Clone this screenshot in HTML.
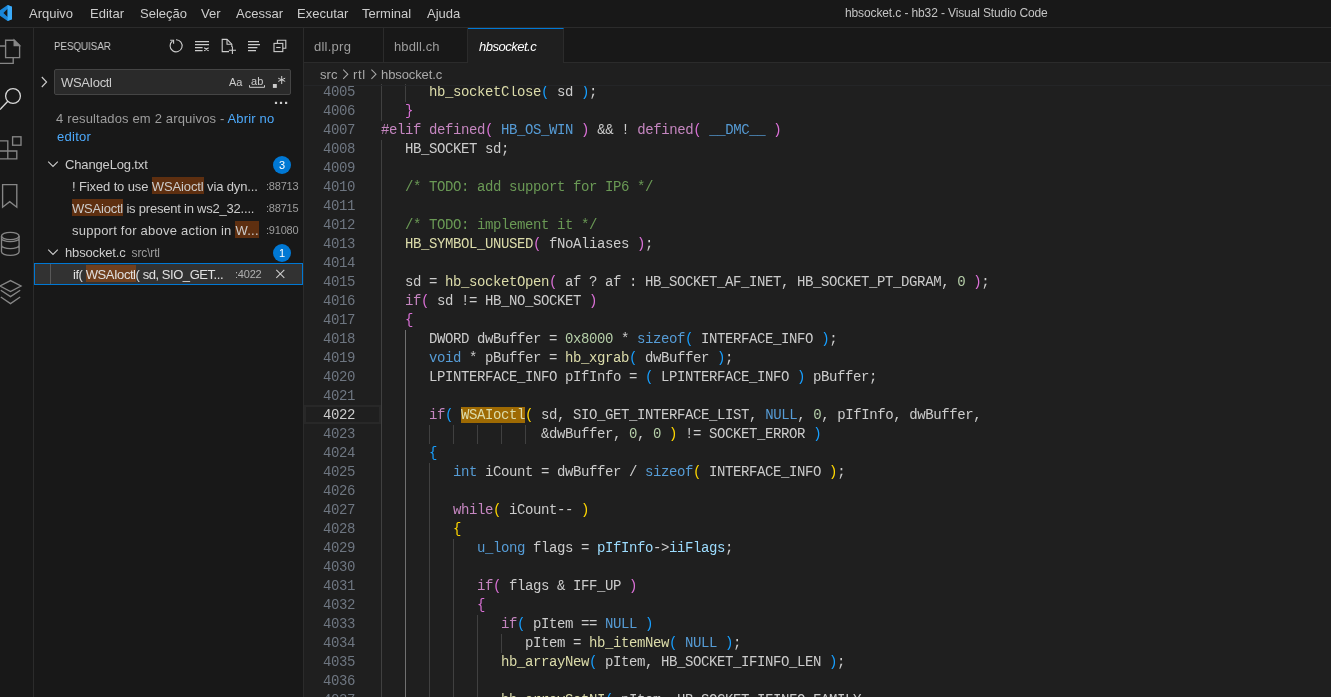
<!DOCTYPE html>
<html><head><meta charset="utf-8"><style>
*{margin:0;padding:0;box-sizing:border-box}
html,body{width:1331px;height:697px;overflow:hidden;background:#181818;font-family:"Liberation Sans",sans-serif;color:#cccccc;position:relative}
.a{position:absolute;white-space:pre;will-change:transform}
.hl{background:#5e2f10;padding:2.3px 0 0.3px}
.code{font-family:"Liberation Mono",monospace;font-size:14px;letter-spacing:-0.4px;line-height:19px;color:#cccccc;left:381px}
.ln{font-family:"Liberation Mono",monospace;font-size:14px;letter-spacing:-0.4px;line-height:19px;color:#6e7681;text-align:right;width:60px;left:295px}
.k{color:#c586c0}.t{color:#569cd6}.f{color:#dcdcaa}.c{color:#6a9955}.n{color:#b5cea8}.v{color:#9cdcfe}
.b1{color:#da70d6}.b2{color:#179fff}.b3{color:#ffd700}
.g{position:absolute;width:1px;background:#404040}
</style></head><body>
<div class="a" style="left:0;top:0;width:1331px;height:28px;background:#181818;border-bottom:1px solid #2b2b2b"></div>
<svg class="a" style="left:0;top:0" width="16" height="27" viewBox="0 0 16 27"><path fill="#1a86d8" fill-rule="evenodd" d="M-0.5 10.6 L7.6 5 L12 6.8 V19.2 L7.6 21 L-0.5 15.4 Z M3.4 12.9 L7.6 8.8 V17 Z"/><path fill="#3aaaf8" d="M7.6 5 L12 6.8 V19.2 L7.6 21 Z"/></svg>
<div class="a " style="left:29px;top:5.00px;font-size:13px;line-height:17px;color:#cccccc;">Arquivo</div>
<div class="a " style="left:90px;top:5.00px;font-size:13px;line-height:17px;color:#cccccc;">Editar</div>
<div class="a " style="left:140px;top:5.00px;font-size:13px;line-height:17px;color:#cccccc;">Seleção</div>
<div class="a " style="left:201px;top:5.00px;font-size:13px;line-height:17px;color:#cccccc;">Ver</div>
<div class="a " style="left:236px;top:5.00px;font-size:13px;line-height:17px;color:#cccccc;">Acessar</div>
<div class="a " style="left:297px;top:5.00px;font-size:13px;line-height:17px;color:#cccccc;">Executar</div>
<div class="a " style="left:362px;top:5.00px;font-size:13px;line-height:17px;color:#cccccc;">Terminal</div>
<div class="a " style="left:427px;top:5.00px;font-size:13px;line-height:17px;color:#cccccc;">Ajuda</div>
<div class="a " style="left:844.5px;top:4.74px;font-size:12px;line-height:16px;color:#c4c4c4;letter-spacing:-0.12px">hbsocket.c - hb32 - Visual Studio Code</div>
<div class="a" style="left:0;top:28px;width:34px;height:669px;background:#181818;border-right:1px solid #2b2b2b"></div>
<svg class="a" style="left:0;top:0" width="33" height="320" viewBox="0 0 33 320" fill="none" stroke="#868686" stroke-width="1.35"><path d="M5.6 40.2 H14.2 L19.6 45.6 V57.6 H5.6 Z"/><path d="M14 40.2 V45.8 H19.6" fill="#868686" stroke="none"/><path d="M14.2 40.2 L19.6 45.6 H14.2 Z" fill="#868686"/><path d="M0 46 H5.6 M13.2 57.6 V63.4 H0"/><circle cx="13" cy="96" r="7.4" stroke="#d7d7d7" stroke-width="1.3"/><path d="M7.8 101.3 L0 109.5" stroke="#d7d7d7" stroke-width="1.4"/><rect x="12.6" y="136.8" width="8.4" height="8.4"/><path d="M0 140.8 H7.8 V158.8 M0 151 H16.8 V158.8 H0"/><path d="M2.6 184.6 H16.8 V207.2 L9.7 201.6 L2.6 207.2 Z"/><ellipse cx="10.3" cy="236" rx="8.8" ry="3.6"/><path d="M1.5 236 V251.8 A8.8 3.6 0 0 0 19.1 251.8 V236 M1.5 238.2 A8.8 3.4 0 0 0 19.1 238.2 M1.5 245.2 A8.8 3.4 0 0 0 19.1 245.2"/><path d="M0 286 L10.5 280.6 L21 286 L10.5 291.6 Z M0.8 290.2 L10.5 296.6 L20.2 290.2 M0.8 297 L10.5 303.6 L20.2 297"/></svg>
<div class="a" style="left:34px;top:28px;width:270px;height:669px;background:#181818;border-right:1px solid #2b2b2b"></div>
<div class="a " style="left:54.2px;top:38.79px;font-size:11px;line-height:14px;color:#cccccc;transform:scaleX(0.885);transform-origin:0 0">PESQUISAR</div>
<svg class="a" style="left:160px;top:34px" width="140" height="26" viewBox="160 34 140 26" fill="none" stroke="#cccccc" stroke-width="1.1"><path d="M172.5 41 A6 6 0 1 0 176 39.8"/><path d="M170.2 40.2 H173.6 V43.8" /><path d="M195 41.6 H209 M195 44.6 H209 M195 47.6 H202.6 M195 50.6 H202.6 M204.2 47.8 L208.6 50.8 M208.6 47.8 L204.2 50.8"/><path d="M231.8 47 V44.2 L227 39.4 H222.2 V51.6 H229"/><path d="M227 39.4 V44.2 H231.8"/><path d="M232.4 46.6 V54 M228.8 50.3 H236"/><path d="M248 41.6 H259 M248 44.6 H260 M248 47.6 H257.4 M248 50.6 H256"/><path d="M277.4 43.2 V40.2 H285.8 V48.2 H283"/><rect x="274" y="43.4" width="8.8" height="8.2"/><path d="M276.2 47.5 H280.6"/></svg>
<svg class="a" style="left:38px;top:72px" width="14" height="20" viewBox="38 72 14 20" fill="none" stroke="#cccccc" stroke-width="1.1"><path d="M41.8 77 L46.6 82 L41.8 87"/></svg>
<div class="a" style="left:54px;top:69px;width:237px;height:26px;background:#2a2a2a;border:1px solid #454545;border-radius:2px"></div>
<div class="a " style="left:61px;top:73.80px;font-size:13px;line-height:17px;color:#cccccc;letter-spacing:-0.35px">WSAIoctl</div>
<div class="a " style="left:228.8px;top:75.39px;font-size:11px;line-height:14px;color:#cccccc;letter-spacing:-0.2px">Aa</div>
<div class="a " style="left:250.6px;top:73.79px;font-size:11px;line-height:14px;color:#cccccc;letter-spacing:0.2px">ab</div>
<svg class="a" style="left:246px;top:72px" width="44" height="22" viewBox="246 72 44 22" fill="none" stroke="#cccccc" stroke-width="1"><path d="M249.5 85.2 V87.3 H264.5 V85.2"/><rect x="272.9" y="84" width="3.9" height="3.9" fill="#cccccc" stroke="none"/><path d="M281.7 76 V84 M278.2 78.2 L285.2 81.4 M285.2 78.2 L278.2 81.4"/></svg>
<svg class="a" style="left:270px;top:98px" width="22" height="10" viewBox="270 98 22 10" fill="#cccccc"><rect x="274.9" y="101.8" width="2.2" height="2.2"/><rect x="279.9" y="101.8" width="2.2" height="2.2"/><rect x="285" y="101.8" width="2.2" height="2.2"/></svg>
<div class="a " style="left:56px;top:109.90px;font-size:13px;line-height:17px;color:#9d9d9d;letter-spacing:0.158px">4 resultados em 2 arquivos - <span style="color:#4daafc">Abrir no</span></div>
<div class="a " style="left:56.5px;top:128.30px;font-size:13px;line-height:17px;color:#4daafc;letter-spacing:0.28px">editor</div>
<svg class="a" style="left:46.2px;top:159.4px" width="14" height="10" viewBox="46.2 159.4 14 10" fill="none" stroke="#cccccc" stroke-width="1.1"><path d="M48.400000000000006 162.0 L53.2 166.8 L58.0 162.0"/></svg>
<div class="a " style="left:64.5px;top:155.60px;font-size:13px;line-height:17px;color:#cccccc;letter-spacing:-0.15px">ChangeLog.txt</div>
<div class="a" style="left:273px;top:156px;width:18px;height:18px;border-radius:9px;background:#0078d4;color:#ffffff;font-size:11px;line-height:18px;text-align:center">3</div>
<div class="a " style="left:72.4px;top:178.30px;font-size:13px;line-height:17px;color:#cccccc;letter-spacing:-0.124px">! Fixed to use <span class="hl">WSAioctl</span> via dyn...</div>
<div class="a " style="left:266.3px;top:179.49px;font-size:11px;line-height:14px;color:#9d9d9d;letter-spacing:-0.2px">:88713</div>
<div class="a " style="left:72.4px;top:200.30px;font-size:13px;line-height:17px;color:#cccccc;letter-spacing:-0.215px"><span class="hl">WSAioctl</span> is present in ws2_32....</div>
<div class="a " style="left:266.3px;top:201.49px;font-size:11px;line-height:14px;color:#9d9d9d;letter-spacing:-0.2px">:88715</div>
<div class="a " style="left:72.4px;top:222.30px;font-size:13px;line-height:17px;color:#cccccc;letter-spacing:0.235px">support for above action in <span class="hl">W...</span></div>
<div class="a " style="left:266.3px;top:223.49px;font-size:11px;line-height:14px;color:#9d9d9d;letter-spacing:-0.2px">:91080</div>
<svg class="a" style="left:46.2px;top:247.4px" width="14" height="10" viewBox="46.2 247.4 14 10" fill="none" stroke="#cccccc" stroke-width="1.1"><path d="M48.400000000000006 250.0 L53.2 254.8 L58.0 250.0"/></svg>
<div class="a " style="left:64.5px;top:244.00px;font-size:13px;line-height:17px;color:#cccccc;letter-spacing:-0.15px">hbsocket.c <span style="font-size:12px;color:#9d9d9d;margin-left:2.5px">src\rtl</span></div>
<div class="a" style="left:273px;top:243.8px;width:18px;height:18px;border-radius:9px;background:#0078d4;color:#ffffff;font-size:11px;line-height:18px;text-align:center">1</div>
<div class="a" style="left:34px;top:263px;width:269px;height:22px;background:#323232;border:1px solid #0078d4"></div>
<div class="a" style="left:50px;top:264px;width:1px;height:20px;background:#585858"></div>
<div class="a " style="left:72.6px;top:266.00px;font-size:13px;line-height:17px;color:#e0e0e0;letter-spacing:-0.445px">if( <span class="hl" style="background:#6f3f1e">WSAIoctl</span>( sd, SIO_GET...</div>
<div class="a " style="left:234.5px;top:267.19px;font-size:11px;line-height:14px;color:#b0b0b0;letter-spacing:-0.2px">:4022</div>
<svg class="a" style="left:272px;top:266px" width="16" height="16" viewBox="272 266 16 16" fill="none" stroke="#cccccc" stroke-width="1.1"><path d="M276.3 269.9 L284.3 277.9 M284.3 269.9 L276.3 277.9"/></svg>
<div class="a" style="left:304px;top:28px;width:1027px;height:35px;background:#181818;border-bottom:1px solid #2b2b2b"></div>
<div class="a" style="left:304px;top:28px;width:80px;height:34px;border-right:1px solid #2b2b2b"></div>
<div class="a" style="left:384px;top:28px;width:84px;height:34px;border-right:1px solid #2b2b2b"></div>
<div class="a" style="left:468px;top:28px;width:96px;height:35px;background:#1f1f1f;border-right:1px solid #2b2b2b;border-top:1px solid #0078d4"></div>
<div class="a " style="left:314.3px;top:38.10px;font-size:13px;line-height:17px;color:#9d9d9d;letter-spacing:0.25px">dll.prg</div>
<div class="a " style="left:394px;top:38.10px;font-size:13px;line-height:17px;color:#9d9d9d;letter-spacing:0.1px">hbdll.ch</div>
<div class="a " style="left:478.5px;top:37.90px;font-size:13px;line-height:17px;color:#ffffff;font-style:italic;letter-spacing:-0.5px">hbsocket.c</div>
<div class="a" style="left:304px;top:63px;width:1027px;height:634px;background:#1f1f1f"></div>
<div class="a " style="left:320px;top:65.80px;font-size:13px;line-height:17px;color:#a9a9a9;letter-spacing:0.1px">src</div>
<div class="a " style="left:353.2px;top:65.80px;font-size:13px;line-height:17px;color:#a9a9a9;letter-spacing:0.6px">rtl</div>
<div class="a " style="left:381.2px;top:65.80px;font-size:13px;line-height:17px;color:#a9a9a9;letter-spacing:-0.1px">hbsocket.c</div>
<svg class="a" style="left:338px;top:66px" width="44" height="16" viewBox="338 66 44 16" fill="none" stroke="#a9a9a9" stroke-width="1.05"><path d="M343.2 69.6 L347.8 74.2 L343.2 78.8 M371.4 69.6 L376 74.2 L371.4 78.8"/></svg>
<div class="a" style="left:304px;top:84px;width:1027px;height:613px;overflow:hidden">
<div class="g" style="left:77px;top:-1.5px;height:19px;background:#404040"></div>
<div class="g" style="left:101px;top:-1.5px;height:19px;background:#404040"></div>
<div class="a ln" style="top:-1.5px;left:-9px;color:#6e7681">4005</div>
<div class="a code" style="top:-1.5px;left:125.0px"><span class="f">hb_socketClose</span><span class="b2">(</span> sd <span class="b2">)</span>;</div>
<div class="g" style="left:77px;top:17.5px;height:19px;background:#404040"></div>
<div class="a ln" style="top:17.5px;left:-9px;color:#6e7681">4006</div>
<div class="a code" style="top:17.5px;left:101.0px"><span class="b1">}</span></div>
<div class="a ln" style="top:36.5px;left:-9px;color:#6e7681">4007</div>
<div class="a code" style="top:36.5px;left:77.0px"><span class="k">#elif</span> <span class="k">defined</span><span class="b1">(</span> <span class="t">HB_OS_WIN</span> <span class="b1">)</span> &amp;&amp; ! <span class="k">defined</span><span class="b1">(</span> <span class="t">__DMC__</span> <span class="b1">)</span></div>
<div class="g" style="left:77px;top:55.5px;height:19px;background:#404040"></div>
<div class="a ln" style="top:55.5px;left:-9px;color:#6e7681">4008</div>
<div class="a code" style="top:55.5px;left:101.0px">HB_SOCKET sd;</div>
<div class="g" style="left:77px;top:74.5px;height:19px;background:#404040"></div>
<div class="a ln" style="top:74.5px;left:-9px;color:#6e7681">4009</div>
<div class="g" style="left:77px;top:93.5px;height:19px;background:#404040"></div>
<div class="a ln" style="top:93.5px;left:-9px;color:#6e7681">4010</div>
<div class="a code" style="top:93.5px;left:101.0px"><span class="c">/* TODO: add support for IP6 */</span></div>
<div class="g" style="left:77px;top:112.5px;height:19px;background:#404040"></div>
<div class="a ln" style="top:112.5px;left:-9px;color:#6e7681">4011</div>
<div class="g" style="left:77px;top:131.5px;height:19px;background:#404040"></div>
<div class="a ln" style="top:131.5px;left:-9px;color:#6e7681">4012</div>
<div class="a code" style="top:131.5px;left:101.0px"><span class="c">/* TODO: implement it */</span></div>
<div class="g" style="left:77px;top:150.5px;height:19px;background:#404040"></div>
<div class="a ln" style="top:150.5px;left:-9px;color:#6e7681">4013</div>
<div class="a code" style="top:150.5px;left:101.0px"><span class="f">HB_SYMBOL_UNUSED</span><span class="b1">(</span> fNoAliases <span class="b1">)</span>;</div>
<div class="g" style="left:77px;top:169.5px;height:19px;background:#404040"></div>
<div class="a ln" style="top:169.5px;left:-9px;color:#6e7681">4014</div>
<div class="g" style="left:77px;top:188.5px;height:19px;background:#404040"></div>
<div class="a ln" style="top:188.5px;left:-9px;color:#6e7681">4015</div>
<div class="a code" style="top:188.5px;left:101.0px">sd = <span class="f">hb_socketOpen</span><span class="b1">(</span> af ? af : HB_SOCKET_AF_INET, HB_SOCKET_PT_DGRAM, <span class="n">0</span> <span class="b1">)</span>;</div>
<div class="g" style="left:77px;top:207.5px;height:19px;background:#404040"></div>
<div class="a ln" style="top:207.5px;left:-9px;color:#6e7681">4016</div>
<div class="a code" style="top:207.5px;left:101.0px"><span class="k">if</span><span class="b1">(</span> sd != HB_NO_SOCKET <span class="b1">)</span></div>
<div class="g" style="left:77px;top:226.5px;height:19px;background:#404040"></div>
<div class="a ln" style="top:226.5px;left:-9px;color:#6e7681">4017</div>
<div class="a code" style="top:226.5px;left:101.0px"><span class="b1">{</span></div>
<div class="g" style="left:77px;top:245.5px;height:19px;background:#404040"></div>
<div class="g" style="left:101px;top:245.5px;height:19px;background:#707070"></div>
<div class="a ln" style="top:245.5px;left:-9px;color:#6e7681">4018</div>
<div class="a code" style="top:245.5px;left:125.0px">DWORD dwBuffer = <span class="n">0x8000</span> * <span class="t">sizeof</span><span class="b2">(</span> INTERFACE_INFO <span class="b2">)</span>;</div>
<div class="g" style="left:77px;top:264.5px;height:19px;background:#404040"></div>
<div class="g" style="left:101px;top:264.5px;height:19px;background:#707070"></div>
<div class="a ln" style="top:264.5px;left:-9px;color:#6e7681">4019</div>
<div class="a code" style="top:264.5px;left:125.0px"><span class="t">void</span> * pBuffer = <span class="f">hb_xgrab</span><span class="b2">(</span> dwBuffer <span class="b2">)</span>;</div>
<div class="g" style="left:77px;top:283.5px;height:19px;background:#404040"></div>
<div class="g" style="left:101px;top:283.5px;height:19px;background:#707070"></div>
<div class="a ln" style="top:283.5px;left:-9px;color:#6e7681">4020</div>
<div class="a code" style="top:283.5px;left:125.0px">LPINTERFACE_INFO pIfInfo = <span class="b2">(</span> LPINTERFACE_INFO <span class="b2">)</span> pBuffer;</div>
<div class="g" style="left:77px;top:302.5px;height:19px;background:#404040"></div>
<div class="g" style="left:101px;top:302.5px;height:19px;background:#707070"></div>
<div class="a ln" style="top:302.5px;left:-9px;color:#6e7681">4021</div>
<div class="g" style="left:77px;top:321.5px;height:19px;background:#404040"></div>
<div class="g" style="left:101px;top:321.5px;height:19px;background:#707070"></div>
<div class="a ln" style="top:321.5px;left:-9px;color:#cccccc">4022</div>
<div class="a code" style="top:321.5px;left:125.0px"><span class="k">if</span><span class="b2">(</span> <span class="f" style="background:#9e6a03">WSAIoctl</span><span class="b3">(</span> sd, SIO_GET_INTERFACE_LIST, <span class="t">NULL</span>, <span class="n">0</span>, pIfInfo, dwBuffer,</div>
<div class="g" style="left:77px;top:340.5px;height:19px;background:#404040"></div>
<div class="g" style="left:101px;top:340.5px;height:19px;background:#707070"></div>
<div class="g" style="left:125px;top:340.5px;height:19px;background:#404040"></div>
<div class="g" style="left:149px;top:340.5px;height:19px;background:#404040"></div>
<div class="g" style="left:173px;top:340.5px;height:19px;background:#404040"></div>
<div class="g" style="left:197px;top:340.5px;height:19px;background:#404040"></div>
<div class="g" style="left:221px;top:340.5px;height:19px;background:#404040"></div>
<div class="a ln" style="top:340.5px;left:-9px;color:#6e7681">4023</div>
<div class="a code" style="top:340.5px;left:237.0px">&amp;dwBuffer, <span class="n">0</span>, <span class="n">0</span> <span class="b3">)</span> != SOCKET_ERROR <span class="b2">)</span></div>
<div class="g" style="left:77px;top:359.5px;height:19px;background:#404040"></div>
<div class="g" style="left:101px;top:359.5px;height:19px;background:#707070"></div>
<div class="a ln" style="top:359.5px;left:-9px;color:#6e7681">4024</div>
<div class="a code" style="top:359.5px;left:125.0px"><span class="b2">{</span></div>
<div class="g" style="left:77px;top:378.5px;height:19px;background:#404040"></div>
<div class="g" style="left:101px;top:378.5px;height:19px;background:#707070"></div>
<div class="g" style="left:125px;top:378.5px;height:19px;background:#404040"></div>
<div class="a ln" style="top:378.5px;left:-9px;color:#6e7681">4025</div>
<div class="a code" style="top:378.5px;left:149.0px"><span class="t">int</span> iCount = dwBuffer / <span class="t">sizeof</span><span class="b3">(</span> INTERFACE_INFO <span class="b3">)</span>;</div>
<div class="g" style="left:77px;top:397.5px;height:19px;background:#404040"></div>
<div class="g" style="left:101px;top:397.5px;height:19px;background:#707070"></div>
<div class="g" style="left:125px;top:397.5px;height:19px;background:#404040"></div>
<div class="a ln" style="top:397.5px;left:-9px;color:#6e7681">4026</div>
<div class="g" style="left:77px;top:416.5px;height:19px;background:#404040"></div>
<div class="g" style="left:101px;top:416.5px;height:19px;background:#707070"></div>
<div class="g" style="left:125px;top:416.5px;height:19px;background:#404040"></div>
<div class="a ln" style="top:416.5px;left:-9px;color:#6e7681">4027</div>
<div class="a code" style="top:416.5px;left:149.0px"><span class="k">while</span><span class="b3">(</span> iCount-- <span class="b3">)</span></div>
<div class="g" style="left:77px;top:435.5px;height:19px;background:#404040"></div>
<div class="g" style="left:101px;top:435.5px;height:19px;background:#707070"></div>
<div class="g" style="left:125px;top:435.5px;height:19px;background:#404040"></div>
<div class="a ln" style="top:435.5px;left:-9px;color:#6e7681">4028</div>
<div class="a code" style="top:435.5px;left:149.0px"><span class="b3">{</span></div>
<div class="g" style="left:77px;top:454.5px;height:19px;background:#404040"></div>
<div class="g" style="left:101px;top:454.5px;height:19px;background:#707070"></div>
<div class="g" style="left:125px;top:454.5px;height:19px;background:#404040"></div>
<div class="g" style="left:149px;top:454.5px;height:19px;background:#404040"></div>
<div class="a ln" style="top:454.5px;left:-9px;color:#6e7681">4029</div>
<div class="a code" style="top:454.5px;left:173.0px"><span class="t">u_long</span> flags = <span class="v">pIfInfo</span>-><span class="v">iiFlags</span>;</div>
<div class="g" style="left:77px;top:473.5px;height:19px;background:#404040"></div>
<div class="g" style="left:101px;top:473.5px;height:19px;background:#707070"></div>
<div class="g" style="left:125px;top:473.5px;height:19px;background:#404040"></div>
<div class="g" style="left:149px;top:473.5px;height:19px;background:#404040"></div>
<div class="a ln" style="top:473.5px;left:-9px;color:#6e7681">4030</div>
<div class="g" style="left:77px;top:492.5px;height:19px;background:#404040"></div>
<div class="g" style="left:101px;top:492.5px;height:19px;background:#707070"></div>
<div class="g" style="left:125px;top:492.5px;height:19px;background:#404040"></div>
<div class="g" style="left:149px;top:492.5px;height:19px;background:#404040"></div>
<div class="a ln" style="top:492.5px;left:-9px;color:#6e7681">4031</div>
<div class="a code" style="top:492.5px;left:173.0px"><span class="k">if</span><span class="b1">(</span> flags &amp; IFF_UP <span class="b1">)</span></div>
<div class="g" style="left:77px;top:511.5px;height:19px;background:#404040"></div>
<div class="g" style="left:101px;top:511.5px;height:19px;background:#707070"></div>
<div class="g" style="left:125px;top:511.5px;height:19px;background:#404040"></div>
<div class="g" style="left:149px;top:511.5px;height:19px;background:#404040"></div>
<div class="a ln" style="top:511.5px;left:-9px;color:#6e7681">4032</div>
<div class="a code" style="top:511.5px;left:173.0px"><span class="b1">{</span></div>
<div class="g" style="left:77px;top:530.5px;height:19px;background:#404040"></div>
<div class="g" style="left:101px;top:530.5px;height:19px;background:#707070"></div>
<div class="g" style="left:125px;top:530.5px;height:19px;background:#404040"></div>
<div class="g" style="left:149px;top:530.5px;height:19px;background:#404040"></div>
<div class="g" style="left:173px;top:530.5px;height:19px;background:#404040"></div>
<div class="a ln" style="top:530.5px;left:-9px;color:#6e7681">4033</div>
<div class="a code" style="top:530.5px;left:197.0px"><span class="k">if</span><span class="b2">(</span> pItem == <span class="t">NULL</span> <span class="b2">)</span></div>
<div class="g" style="left:77px;top:549.5px;height:19px;background:#404040"></div>
<div class="g" style="left:101px;top:549.5px;height:19px;background:#707070"></div>
<div class="g" style="left:125px;top:549.5px;height:19px;background:#404040"></div>
<div class="g" style="left:149px;top:549.5px;height:19px;background:#404040"></div>
<div class="g" style="left:173px;top:549.5px;height:19px;background:#404040"></div>
<div class="g" style="left:197px;top:549.5px;height:19px;background:#404040"></div>
<div class="a ln" style="top:549.5px;left:-9px;color:#6e7681">4034</div>
<div class="a code" style="top:549.5px;left:221.0px">pItem = <span class="f">hb_itemNew</span><span class="b2">(</span> <span class="t">NULL</span> <span class="b2">)</span>;</div>
<div class="g" style="left:77px;top:568.5px;height:19px;background:#404040"></div>
<div class="g" style="left:101px;top:568.5px;height:19px;background:#707070"></div>
<div class="g" style="left:125px;top:568.5px;height:19px;background:#404040"></div>
<div class="g" style="left:149px;top:568.5px;height:19px;background:#404040"></div>
<div class="g" style="left:173px;top:568.5px;height:19px;background:#404040"></div>
<div class="a ln" style="top:568.5px;left:-9px;color:#6e7681">4035</div>
<div class="a code" style="top:568.5px;left:197.0px"><span class="f">hb_arrayNew</span><span class="b2">(</span> pItem, HB_SOCKET_IFINFO_LEN <span class="b2">)</span>;</div>
<div class="g" style="left:77px;top:587.5px;height:19px;background:#404040"></div>
<div class="g" style="left:101px;top:587.5px;height:19px;background:#707070"></div>
<div class="g" style="left:125px;top:587.5px;height:19px;background:#404040"></div>
<div class="g" style="left:149px;top:587.5px;height:19px;background:#404040"></div>
<div class="g" style="left:173px;top:587.5px;height:19px;background:#404040"></div>
<div class="a ln" style="top:587.5px;left:-9px;color:#6e7681">4036</div>
<div class="g" style="left:77px;top:606.5px;height:19px;background:#404040"></div>
<div class="g" style="left:101px;top:606.5px;height:19px;background:#707070"></div>
<div class="g" style="left:125px;top:606.5px;height:19px;background:#404040"></div>
<div class="g" style="left:149px;top:606.5px;height:19px;background:#404040"></div>
<div class="g" style="left:173px;top:606.5px;height:19px;background:#404040"></div>
<div class="a ln" style="top:606.5px;left:-9px;color:#6e7681">4037</div>
<div class="a code" style="top:606.5px;left:197.0px"><span class="f">hb_arraySetNI</span><span class="b2">(</span> pItem, HB_SOCKET_IFINFO_FAMILY,</div>
<div class="a" style="left:0px;top:321px;width:77px;height:19px;border:2px solid #282828"></div>
</div>
<div class="a" style="left:304px;top:85px;width:1027px;height:1px;background:#242527"></div>
</body></html>
